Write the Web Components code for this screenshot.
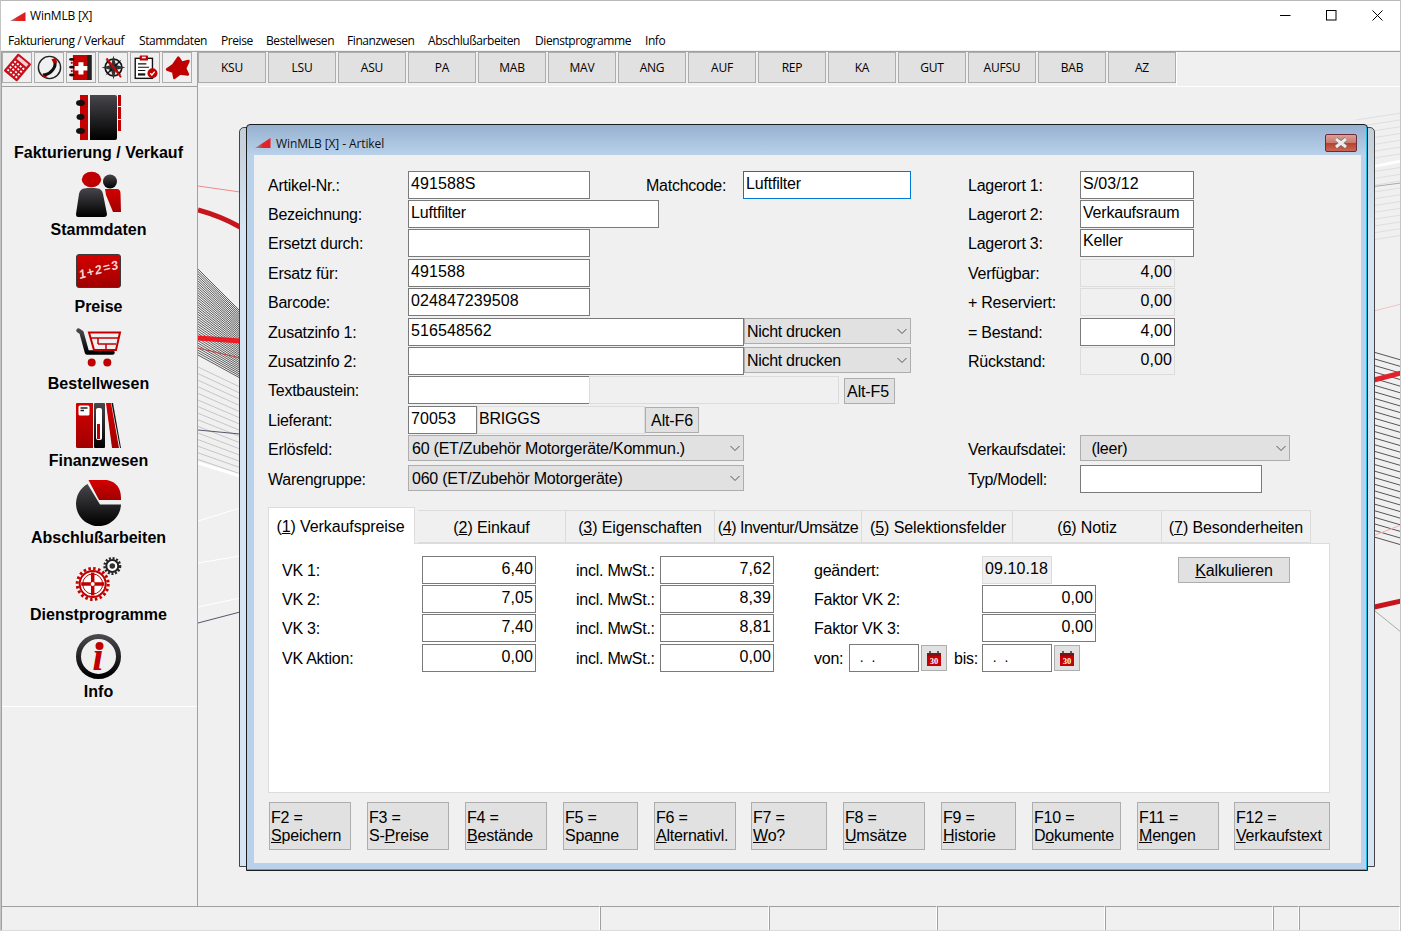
<!DOCTYPE html>
<html lang="de"><head><meta charset="utf-8"><title>WinMLB [X]</title>
<style>
html,body{margin:0;padding:0;height:100%;overflow:hidden;background:#f0f0f0}
body{font-family:"Liberation Sans",Arial,sans-serif;font-size:16px;color:#000}
u{text-underline-offset:1px}
</style></head><body>
<win-app>
  <title-bar slot="title">WinMLB [X]</title-bar>
  <menu-bar slot="menu">
    <menu-item style="width:131px">Fakturierung / Verkauf</menu-item><menu-item style="width:82px">Stammdaten</menu-item><menu-item style="width:45px">Preise</menu-item><menu-item style="width:81px">Bestellwesen</menu-item><menu-item style="width:81px">Finanzwesen</menu-item><menu-item style="width:107px">Abschlußarbeiten</menu-item><menu-item style="width:110px">Dienstprogramme</menu-item><menu-item>Info</menu-item>
  </menu-bar>
  <icon-tools slot="icons">
    <icon-btn><app-icon name="t1" size="25"></app-icon></icon-btn><icon-btn><app-icon name="t2" size="25"></app-icon></icon-btn><icon-btn><app-icon name="t3" size="25"></app-icon></icon-btn><icon-btn><app-icon name="t4" size="25"></app-icon></icon-btn><icon-btn><app-icon name="t5" size="25"></app-icon></icon-btn><icon-btn><app-icon name="t6" size="25"></app-icon></icon-btn>
  </icon-tools>
  <side-nav slot="side">
    <nav-item><app-icon slot="icon" name="book" size="45"></app-icon>Fakturierung / Verkauf</nav-item>
    <nav-item><app-icon slot="icon" name="people" size="45"></app-icon>Stammdaten</nav-item>
    <nav-item><app-icon slot="icon" name="board" size="45"></app-icon>Preise</nav-item>
    <nav-item><app-icon slot="icon" name="cart" size="45"></app-icon>Bestellwesen</nav-item>
    <nav-item><app-icon slot="icon" name="binders" size="45"></app-icon>Finanzwesen</nav-item>
    <nav-item><app-icon slot="icon" name="pie" size="45"></app-icon>Abschlußarbeiten</nav-item>
    <nav-item><app-icon slot="icon" name="gears" size="45"></app-icon>Dienstprogramme</nav-item>
    <nav-item><app-icon slot="icon" name="info" size="45"></app-icon>Info</nav-item>
  </side-nav>
  <text-tools slot="tools">
    <tool-btn>KSU</tool-btn><tool-btn>LSU</tool-btn><tool-btn>ASU</tool-btn><tool-btn>PA</tool-btn><tool-btn>MAB</tool-btn><tool-btn>MAV</tool-btn><tool-btn>ANG</tool-btn><tool-btn>AUF</tool-btn><tool-btn>REP</tool-btn><tool-btn>KA</tool-btn><tool-btn>GUT</tool-btn><tool-btn>AUFSU</tool-btn><tool-btn>BAB</tool-btn><tool-btn>AZ</tool-btn>
  </text-tools>
  <mdi-desktop slot="desk">
    <desk-pattern></desk-pattern>
    <back-window></back-window>
    <mdi-window caption="WinMLB [X] - Artikel">
      <form-grid>
        <f-label style="grid-row:1;grid-column:lab/inp">Artikel-Nr.:</f-label>
        <f-field style="grid-row:1;grid-column:inp/short">491588S</f-field>
        <f-label style="grid-row:1;grid-column:nm/zi;margin-left:1px">Matchcode:</f-label>
        <f-field tight kind="focus" style="grid-row:1;grid-column:zi/sel;margin-left:-1px">Luftfilter</f-field>
        <f-label style="grid-row:1;grid-column:rl/rf">Lagerort 1:</f-label>
        <f-field style="grid-row:1;grid-column:rf/s">S/03/12</f-field>

        <f-label style="grid-row:2;grid-column:lab/inp">Bezeichnung:</f-label>
        <f-field tight style="grid-row:2;grid-column:inp/bez">Luftfilter</f-field>
        <f-label style="grid-row:2;grid-column:rl/rf">Lagerort 2:</f-label>
        <f-field tight style="grid-row:2;grid-column:rf/s">Verkaufsraum</f-field>

        <f-label style="grid-row:3;grid-column:lab/inp">Ersetzt durch:</f-label>
        <f-field style="grid-row:3;grid-column:inp/short"></f-field>
        <f-label style="grid-row:3;grid-column:rl/rf">Lagerort 3:</f-label>
        <f-field tight style="grid-row:3;grid-column:rf/s;padding-top:2px">Keller</f-field>

        <f-label style="grid-row:4;grid-column:lab/inp">Ersatz für:</f-label>
        <f-field style="grid-row:4;grid-column:inp/short">491588</f-field>
        <f-label style="grid-row:4;grid-column:rl/rf">Verfügbar:</f-label>
        <f-field kind="ro" num style="grid-row:4;grid-column:rf/n">4,00</f-field>

        <f-label style="grid-row:5;grid-column:lab/inp">Barcode:</f-label>
        <f-field style="grid-row:5;grid-column:inp/short">024847239508</f-field>
        <f-label style="grid-row:5;grid-column:rl/rf">+ Reserviert:</f-label>
        <f-field kind="ro" num style="grid-row:5;grid-column:rf/n">0,00</f-field>

        <f-label style="grid-row:6;grid-column:lab/inp">Zusatzinfo 1:</f-label>
        <f-field style="grid-row:6;grid-column:inp/zi">516548562</f-field>
        <f-select style="grid-row:6;grid-column:zi/sel;padding-left:2px;letter-spacing:-.3px">Nicht drucken</f-select>
        <f-label style="grid-row:6;grid-column:rl/rf">= Bestand:</f-label>
        <f-field num style="grid-row:6;grid-column:rf/n">4,00</f-field>

        <f-label style="grid-row:7;grid-column:lab/inp">Zusatzinfo 2:</f-label>
        <f-field style="grid-row:7;grid-column:inp/zi"></f-field>
        <f-select style="grid-row:7;grid-column:zi/sel;padding-left:2px;letter-spacing:-.3px">Nicht drucken</f-select>
        <f-label style="grid-row:7;grid-column:rl/rf">Rückstand:</f-label>
        <f-field kind="ro" num style="grid-row:7;grid-column:rf/n">0,00</f-field>

        <f-label style="grid-row:8;grid-column:lab/inp">Textbaustein:</f-label>
        <f-field style="grid-row:8;grid-column:inp/short"></f-field>
        <f-field kind="ro" style="grid-row:8;grid-column:short/ro;margin-left:-1px"></f-field>
        <f-btn style="grid-row:8;grid-column:alt/altend;margin-top:2px;height:26px;padding-right:3px">Alt-F5</f-btn>

        <f-label style="grid-row:9;grid-column:lab/inp">Lieferant:</f-label>
        <f-field style="grid-row:9;grid-column:inp/sup">70053</f-field>
        <f-field tight kind="ro" style="grid-row:9;grid-column:sup/nm;padding-left:1px">BRIGGS</f-field>
        <f-btn style="grid-row:9;grid-column:nm/zi;justify-self:start;width:54px;margin-top:1px;height:26px">Alt-F6</f-btn>

        <f-label style="grid-row:10;grid-column:lab/inp">Erlösfeld:</f-label>
        <f-select style="grid-row:10;grid-column:inp/zi">60 (ET/Zubehör Motorgeräte/Kommun.)</f-select>
        <f-label style="grid-row:10;grid-column:rl/rf">Verkaufsdatei:</f-label>
        <f-select style="grid-row:10;grid-column:rf/e;padding-left:2px">&nbsp;&nbsp;(leer)</f-select>

        <f-label style="grid-row:11;grid-column:lab/inp">Warengruppe:</f-label>
        <f-select style="grid-row:11;grid-column:inp/zi">060 (ET/Zubehör Motorgeräte)</f-select>
        <f-label style="grid-row:11;grid-column:rl/rf">Typ/Modell:</f-label>
        <f-field style="grid-row:11;grid-column:rf/t"></f-field>
      </form-grid>

      <tab-strip>
        <tab-item active style="width:147px;margin-right:3px">(<u>1</u>) Verkaufspreise</tab-item>
        <tab-item style="width:148px">(<u>2</u>) Einkauf</tab-item>
        <tab-item style="width:149px">(<u>3</u>) Eigenschaften</tab-item>
        <tab-item style="width:147px;letter-spacing:-.45px">(<u>4</u>) Inventur/Umsätze</tab-item>
        <tab-item style="width:151px;padding-left:2px">(<u>5</u>) Selektionsfelder</tab-item>
        <tab-item style="width:149px">(<u>6</u>) Notiz</tab-item>
        <tab-item style="width:149px">(<u>7</u>) Besonderheiten</tab-item>
      </tab-strip>

      <tab-panel>
        <f-label style="grid-row:1;grid-column:lab/fld">VK 1:</f-label>
        <f-field num style="grid-row:1;grid-column:fld/e1">6,40</f-field>
        <f-label style="grid-row:1;grid-column:inc/f2">incl. MwSt.:</f-label>
        <f-field num style="grid-row:1;grid-column:f2/e2">7,62</f-field>
        <f-label style="grid-row:1;grid-column:g/f3">geändert:</f-label>
        <f-field kind="ro" style="grid-row:1;grid-column:f3/f3e">09.10.18</f-field>
        <f-btn style="grid-row:1;grid-column:k/ke;height:26px;margin-top:1px"><u>K</u>alkulieren</f-btn>

        <f-label style="grid-row:2;grid-column:lab/fld">VK 2:</f-label>
        <f-field num style="grid-row:2;grid-column:fld/e1">7,05</f-field>
        <f-label style="grid-row:2;grid-column:inc/f2">incl. MwSt.:</f-label>
        <f-field num style="grid-row:2;grid-column:f2/e2">8,39</f-field>
        <f-label style="grid-row:2;grid-column:g/f3">Faktor VK 2:</f-label>
        <f-field num style="grid-row:2;grid-column:f3/f3l">0,00</f-field>

        <f-label style="grid-row:3;grid-column:lab/fld">VK 3:</f-label>
        <f-field num style="grid-row:3;grid-column:fld/e1">7,40</f-field>
        <f-label style="grid-row:3;grid-column:inc/f2">incl. MwSt.:</f-label>
        <f-field num style="grid-row:3;grid-column:f2/e2">8,81</f-field>
        <f-label style="grid-row:3;grid-column:g/f3">Faktor VK 3:</f-label>
        <f-field num style="grid-row:3;grid-column:f3/f3l">0,00</f-field>

        <f-label style="grid-row:4;grid-column:lab/fld">VK Aktion:</f-label>
        <f-field num style="grid-row:4;grid-column:fld/e1">0,00</f-field>
        <f-label style="grid-row:4;grid-column:inc/f2">incl. MwSt.:</f-label>
        <f-field num style="grid-row:4;grid-column:f2/e2">0,00</f-field>
        <f-label style="grid-row:4;grid-column:g/d1">von:</f-label>
        <f-field style="grid-row:4;grid-column:d1/d1e;white-space:pre;font-size:14px;letter-spacing:0">  .  .</f-field>
        <cal-btn style="grid-row:4;grid-column:c1/c1e"></cal-btn>
        <f-label style="grid-row:4;grid-column:bis/f3">bis:</f-label>
        <f-field style="grid-row:4;grid-column:f3/f3e;white-space:pre;font-size:14px;letter-spacing:0">  .  .</f-field>
        <cal-btn style="grid-row:4;grid-column:c2/c2e"></cal-btn>
      </tab-panel>

      <fkey-row>
        <fkey-btn style="width:82px">F2 =<br><u>S</u>peichern</fkey-btn>
        <fkey-btn style="width:82px">F3 =<br>S-<u>P</u>reise</fkey-btn>
        <fkey-btn style="width:82px">F4 =<br><u>B</u>estände</fkey-btn>
        <fkey-btn style="width:75px">F5 =<br>Spa<u>n</u>ne</fkey-btn>
        <fkey-btn style="width:82px">F6 =<br><u>A</u>lternativl.</fkey-btn>
        <fkey-btn style="width:76px;margin-left:-1px">F7 =<br><u>W</u>o?</fkey-btn>
        <fkey-btn style="width:82px">F8 =<br><u>U</u>msätze</fkey-btn>
        <fkey-btn style="width:75px">F9 =<br><u>H</u>istorie</fkey-btn>
        <fkey-btn style="width:89px">F10 =<br>D<u>o</u>kumente</fkey-btn>
        <fkey-btn style="width:82px">F11 =<br><u>M</u>engen</fkey-btn>
        <fkey-btn style="width:96px;margin-left:-1px">F12 =<br><u>V</u>erkaufstext</fkey-btn>
      </fkey-row>
    </mdi-window>
  </mdi-desktop>
  <status-bar slot="status">
    <status-cell style="width:599px"></status-cell><status-cell style="width:169px"></status-cell><status-cell style="width:168px"></status-cell><status-cell style="width:168px"></status-cell><status-cell style="width:168px"></status-cell><status-cell style="width:26px"></status-cell><status-cell style="flex:1"></status-cell>
  </status-bar>
</win-app>

<script>
function define(name, css, html, init){
  customElements.define(name, class extends HTMLElement{
    constructor(){super();this.attachShadow({mode:'open'}).innerHTML='<style>'+css+'</style>'+(html||'<slot></slot>');}
    connectedCallback(){ if(init) init(this); }
  });
}
const UI='"Open Sans","Noto Sans",sans-serif';

define('win-app',`
:host{display:grid;grid-template-columns:198px 1fr;grid-template-rows:auto minmax(0,1fr) auto;width:1401px;height:931px;box-sizing:border-box;border-top:1px solid #b9b9b9;border-left:1px solid #c4c4c4;border-right:1px solid #c4c4c4;background:#f0f0f0;overflow:hidden}
.top{grid-column:1/3}
.left{display:flex;flex-direction:column;border-left:1px solid #a0a0a0;border-right:1px solid #a0a0a0;border-top:1px solid #a0a0a0;min-height:0;width:197px;box-sizing:border-box}
.right{display:flex;flex-direction:column;border-top:1px solid #a0a0a0;min-height:0;margin-left:-1px}
`,`<div class="top"><slot name="title"></slot><slot name="menu"></slot></div>
<div class="left"><slot name="icons"></slot><slot name="side"></slot></div>
<div class="right"><slot name="tools"></slot><slot name="desk"></slot></div>
<div class="top"><slot name="status"></slot></div>`);

define('title-bar',`
:host{display:flex;align-items:center;height:29px;background:#fff;font:12px/16px ${UI};color:#000}
.ic{width:16px;height:9px;margin:1px 4px 0 9px;flex:none}
.txt{flex:1;letter-spacing:-.2px}
.c{width:46px;height:29px;display:flex;align-items:center;justify-content:center}
`,`<svg class="ic" viewBox="0 0 16 9"><defs><linearGradient id="w" x1="0" x2="1"><stop offset="0" stop-color="#999"/><stop offset=".45" stop-color="#d92b2b"/><stop offset="1" stop-color="#e5141c"/></linearGradient></defs><path d="M0 9 15.5 0V9z" fill="url(#w)"/></svg>
<span class="txt"><slot></slot></span>
<span class="c"><svg width="11" height="11" viewBox="0 0 11 11"><path d="M0 5.500h10.500" stroke="#000" fill="none"/></svg></span>
<span class="c"><svg width="11" height="11" viewBox="0 0 11 11"><rect x=".5" y=".5" width="9.500" height="9.500" stroke="#000" fill="none"/></svg></span>
<span class="c"><svg width="11" height="11" viewBox="0 0 11 11"><path d="M.5.500 10.500 10.500M10.500.500.500 10.500" stroke="#000" fill="none"/></svg></span>`);

define('menu-bar',`:host{display:flex;align-items:center;height:20px;background:#fff;padding-left:7px;border-bottom:1px solid #f0f0f0;font:12px/20px ${UI}}`);
define('menu-item',`:host{display:block;white-space:nowrap;flex:none;letter-spacing:-.42px;padding-top:2px}`);
define('icon-tools',`:host{display:flex;gap:2px;height:35px;box-sizing:border-box;flex:none;border-bottom:1px solid #a0a0a0}`);
define('icon-btn',`:host{display:flex;align-items:center;justify-content:center;width:30px;height:31px;box-sizing:border-box;border:1px solid #adadad;background:#f0f0f0}`);
define('text-tools',`:host{display:flex;gap:2px;height:35px;box-sizing:border-box;flex:none;border-bottom:1px solid #fff}
.w{display:flex;gap:2px;border-right:1px solid #fff;height:34px}`,`<div class="w"><slot></slot></div>`);
define('tool-btn',`:host{display:flex;align-items:center;justify-content:center;width:68px;height:31px;box-sizing:border-box;border:1px solid #adadad;background:#e1e1e1;font:12px ${UI};letter-spacing:-.2px}`);
define('side-nav',`:host{display:block;flex:1;min-height:0;background:#f0f0f0}
.top{height:620px;box-sizing:border-box;padding:8px 2px 0 0;border-bottom:1px solid #fff}`,`<div class="top"><slot></slot></div>`);
define('nav-item',`:host{display:flex;flex-direction:column;align-items:center;height:77px;font:bold 16px/18px "Liberation Sans",Arial,sans-serif;white-space:nowrap}
.l{margin-top:4px}`,`<slot name="icon"></slot><span class="l"><slot></slot></span>`);

/* ---------- icons ---------- */
const gradDefs=`<defs>
<linearGradient id="k" x1="0" x2="0" y1="0" y2="1"><stop offset="0" stop-color="#47474c"/><stop offset="1" stop-color="#000"/></linearGradient>
<linearGradient id="r" x1="0" x2="0" y1="0" y2="1"><stop offset="0" stop-color="#d40000"/><stop offset="1" stop-color="#a00000"/></linearGradient></defs>`;
const ICONS={
book:`<rect x="4" y="0" width="8" height="45" fill="#c40000"/><path d="M14 0H39Q41 0 41 2V43Q41 45 39 45H14z" fill="url(#k)"/><path d="M42 0h3v11h-3zM42 12h3v12h-3zM42 25h3v11h-3z" fill="#c00000"/><ellipse cx="4.500" cy="8" rx="4.500" ry="3" fill="#111"/><ellipse cx="4.500" cy="22" rx="4" ry="3" fill="#111"/><ellipse cx="4.500" cy="36" rx="4.500" ry="3" fill="#111"/>`,
people:`<path d="M29 17h12q3 0 3.500 4L45 40H37L30 23z" fill="url(#r)"/><ellipse cx="15.500" cy="7.500" rx="9.700" ry="7.700" fill="#c00000"/><circle cx="34" cy="9.500" r="7" fill="url(#k)"/><path d="M8 16.500Q15 15 22 16.500 26 17 27 22L31 42Q31 45 28 45H2Q0 45 0 42L3 22Q4 17 8 16.500z" fill="url(#k)"/>`,
board:`<rect x=".5" y="5.500" width="44" height="33" rx="2.500" fill="url(#r)" stroke="#3a3a3a"/><text x="4" y="30" transform="rotate(-15 4 30)" font-family="'Liberation Sans',sans-serif" font-style="italic" font-size="12.500" letter-spacing="1.200" fill="#fff" fill-opacity=".85">1+2=3</text>`,
cart:`<path d="M2.500 4.500 5.500 6.500 11 26.500H36.500" fill="none" stroke="url(#k)" stroke-width="4.500" stroke-linecap="round" stroke-linejoin="round"/><path d="M13 6.500H44L40 24H18z" fill="none" stroke="#c00000" stroke-width="2"/><path d="M15 12H42M22 12V18M22 18H40M30 18V24" stroke="#c00000" stroke-width="1.500" fill="none"/><circle cx="15.700" cy="36.500" r="4" fill="#c00000"/><circle cx="31.300" cy="36.500" r="4" fill="#c00000"/>`,
binders:`<path d="M1 0H17V45H1.500Q0 45 0 43.500V1Q0 0 1 0z" fill="url(#r)"/><rect x="2.500" y="2.500" width="11" height="10" rx="1.500" fill="#fff"/><path d="M4.500 5h7M4.500 7.500h3.500" stroke="#222" stroke-width="1.500"/><rect x="18" y="0" width="11" height="45" rx="1" fill="url(#k)"/><rect x="20" y="5" width="6" height="32" rx="2" fill="#fff"/><rect x="21" y="21" width="3" height="15" fill="#c00000"/><path d="M30 0h5L43 45H36z" fill="url(#r)"/><path d="M35.500 0H37L45 45H44z" fill="#111"/>`,
pie:`<path d="M11.500 4 24 24.500H45A22.500 22.500 0 1 1 11.500 4z" fill="url(#k)"/><path d="M12.500 0H31Q45 3 45 18V20H23z" fill="url(#r)"/>`,
gears:`<circle cx="16.700" cy="27" r="15.500" fill="none" stroke="#c00000" stroke-width="3" stroke-dasharray="2.500 2.370"/><circle cx="16.700" cy="27" r="13" fill="#fff" stroke="#c00000" stroke-width="2"/><circle cx="16.700" cy="27" r="10" fill="none" stroke="#c00000" stroke-width="1"/><path d="M16.700 15.500V38.500M5.200 27H28.200" stroke="#c00000" stroke-width="3.500" /><circle cx="16.700" cy="27" r="2" fill="#fff"/><circle cx="36.300" cy="9" r="7.800" fill="none" stroke="#222" stroke-width="2.400" stroke-dasharray="2 1.680"/><circle cx="36.300" cy="9" r="6" fill="#fff" stroke="#222" stroke-width="2"/><circle cx="36.300" cy="9" r="2.800" fill="#333"/>`,
info:`<circle cx="22.500" cy="22.500" r="20" fill="none" stroke="url(#k)" stroke-width="5"/><circle cx="23.500" cy="12" r="4" fill="#c00000"/><text x="22" y="36" text-anchor="middle" font-family="'Liberation Serif',serif" font-weight="bold" font-style="italic" font-size="40" fill="#c00000">ı</text>`,
t1:`<g transform="rotate(40 22.500 22.500)"><rect x="7" y="2" width="31" height="41" rx="2" fill="#c8101c"/><rect x="11" y="5.500" width="23" height="6" fill="#f6d0d0"/><path d="M11 17.500h23M11 24h23M11 30.500h23M11 37h23" stroke="#fff" stroke-width="3.400" stroke-dasharray="3.600 2.800" fill="none"/></g>`,
t2:`<circle cx="22.500" cy="22.500" r="20" fill="none" stroke="#222" stroke-width="2.600"/><path d="M32 10C35 22 26 33 14 36" fill="none" stroke="#111" stroke-width="5.500"/><path d="M26 7.500 33 5.500 36.500 13 30 15.500z" fill="#c00000"/><path d="M11 32.500 18 37 16 41.500 9 38z" fill="#c00000"/><path d="M13 33 18 35.500 16.500 38.500 11 36z" fill="#111"/>`,
t3:`<rect x="7" y="0" width="32" height="45" rx="1" fill="#c40000"/><rect x="33" y="0" width="8" height="45" fill="#222"/><path d="M17 13h9v7h7v8h-7v7h-9v-7h-7v-8h7z" fill="#fff"/><g fill="#111"><ellipse cx="5" cy="8" rx="5" ry="2.500"/><ellipse cx="5" cy="22" rx="5" ry="2.500"/><ellipse cx="5" cy="36" rx="5" ry="2.500"/></g><g fill="#c00000"><circle cx="5" cy="14" r="2"/><circle cx="5" cy="29" r="2"/></g>`,
t4:`<circle cx="22.500" cy="22.500" r="15" fill="none" stroke="#111" stroke-width="3"/><path d="M22.500 1 27 18 44 22.500 27 27 22.500 44 18 27 1 22.500 18 18z" fill="#333"/><path d="M8 8 21 18 18 21zM37 8 27 21 24 18zM8 37 18 24 21 27zM37 37 24 27 27 24z" fill="#111"/><path d="M10 6 36 40" stroke="#d40000" stroke-width="3.500"/>`,
t5:`<rect x="4" y="6" width="31" height="36" fill="#fff" stroke="#111" stroke-width="2.500"/><rect x="12" y="1" width="15" height="9" fill="#c00000" rx="1"/><rect x="16" y="3" width="7" height="3" fill="#fff"/><path d="M9 16H24M9 22H29M9 28H22" stroke="#111" stroke-width="2"/><path d="M9 35H22" stroke="#111" stroke-width="4"/><circle cx="35" cy="33" r="9" fill="#c40000"/><path d="M31 33 34 36 39 30" stroke="#fff" stroke-width="2.500" fill="none"/>`,
t6:`<path d="M24 5 30 14 42 11 36 24 41 35 27 33 17 41 15 30 4 26 15 18z" fill="#bf0000" stroke="#bf0000" stroke-width="5" stroke-linejoin="round"/>`
};
define('app-icon',`:host{display:block;flex:none;line-height:0}svg{display:block;overflow:visible}`,'<span></span>',el=>{
  const s=el.getAttribute('size')||45;
  el.shadowRoot.querySelector('span').innerHTML=`<svg width="${s}" height="${s}" viewBox="0 0 45 45">${gradDefs}${ICONS[el.getAttribute('name')]||''}</svg>`;
});

/* ---------- desktop ---------- */
define('mdi-desktop',`:host{display:block;position:relative;flex:1;min-height:0;overflow:hidden;background:#f0f0f0}`);
define('desk-pattern',`:host{position:absolute;inset:0;display:block}svg{display:block}`,'<span></span>',el=>{
  let g='';
  const L=(x1,y1,x2,y2,c,w)=>{g+=`<path d="M${x1} ${y1}L${x2} ${y2}" stroke="${c}" stroke-width="${w}" fill="none"/>`;};
  for(let i=0;i<15;i++)L(198,367+i*6.600,240,387+i*6.200,'#c6c6c6',1);
  for(let i=0;i<=36;i++)L(198,269+i*86/36,240,311+i*67/36,'#5c5c5c',1);
  L(198,186,240,192,'#f08a8a',1);
  g+='<path d="M198 210Q220 216 240 227" stroke="#c4161c" stroke-width="5" fill="none"/>';
  L(198,338,240,341,'#ed1c24',5);
  L(198,348,240,358,'#c04040',1);
  L(198,430,240,434,'#55556a',1);
  L(198,463,240,476,'#fff',3);
  L(198,521,240,508,'#fff',1);L(198,563,240,556,'#fff',1);L(198,607,240,598,'#fff',1);
  L(198,623,240,612,'#55556a',1);
  for(let i=0;i<19;i++)L(1356,120+i*6.800,1401,113+i*6.800,'#dedede',1);
  L(1370,167,1401,161,'#fff',3);L(1370,187,1401,183,'#aaa',1);L(1370,312,1401,304,'#f2c4c4',1);
  for(let i=0;i<29;i++)L(1370,351+i*6.600,1401,360+i*6.600,'#555',1);
  L(1370,381,1401,373,'#e3202a',5);L(1370,537,1401,525,'#f0b0b0',1);
  L(1370,608,1401,601,'#c4161c',5);L(1370,607,1401,632,'#aaa',1);
  el.shadowRoot.querySelector('span').innerHTML=`<svg width="1203" height="818" viewBox="198 87 1203 818">${g}</svg>`;
});
define('back-window',`:host{position:absolute;left:41px;top:40px;width:1136px;height:740px;box-sizing:border-box;border:1px solid #444;border-radius:5px 5px 0 0;background:linear-gradient(#c4ced8,#d6e4f3 100px)}`,'<span></span>');
define('mdi-window',`
:host{position:absolute;left:48px;top:37px;width:1122px;height:747px;box-sizing:border-box;border:1px solid #1c1c1c;border-radius:4px 4px 0 0;background:linear-gradient(#96b1d0,#b9d1ea 30px);box-shadow:inset -1px -1px 0 #19c1e6;display:flex;flex-direction:column}
.cap{display:flex;align-items:center;height:30px;box-sizing:border-box;padding:6px 0 0 8px;flex:none;font:12px ${UI};letter-spacing:-.1px;color:#111}
.cap svg.i{margin-right:5px}
.sp{flex:1}
.x{width:32px;height:18px;box-sizing:border-box;margin-right:10px;border:1px solid #6d2b3a;border-radius:2px;background:linear-gradient(#dc9e94 0,#cc7a6e 48%,#b4432d 52%,#cc6654 100%);display:flex;align-items:center;justify-content:center}
.body{margin:0 6px 0 7px;flex:none;height:708px;box-sizing:border-box;background:#f0f0f0;padding:16px 31px 0 14px}
`,`<div class="cap"><svg class="i" width="16" height="10" viewBox="0 0 16 10"><defs><linearGradient id="w2" x1="0" x2="1"><stop offset="0" stop-color="#8c9ab0"/><stop offset=".5" stop-color="#d92b2b"/><stop offset="1" stop-color="#ed1c24"/></linearGradient></defs><path d="M0 10 15.500 0V10z" fill="url(#w2)"/></svg><span id="t"></span><span class="sp"></span>
<span class="x"><svg width="16" height="12" viewBox="0 0 16 12"><path d="M3 2 13 10M13 2 3 10" stroke="#6b6b6b" stroke-width="4.200" fill="none"/><path d="M3 2 13 10M13 2 3 10" stroke="#ececec" stroke-width="3" fill="none"/></svg></span></div>
<div class="body"><slot></slot></div>`,el=>{el.shadowRoot.getElementById('t').textContent=el.getAttribute('caption');});

define('form-grid',`:host{display:grid;height:322px;
grid-template-columns:[lab]140px [inp]69px [sup]113px [short]55px [nm]14px [bez]85px [zi]95px [ro]5px [alt]51px [altend]16px [sel]57px [rl]112px [rf]95px [n]19px [s]68px [t]28px [e];
grid-template-rows:29px 29px 30px 29px 30px 29px 29px 30px 29px 30px 28px;align-items:start}`);
define('f-label',`:host{display:block;height:28px;line-height:30px;white-space:nowrap;letter-spacing:-.25px}`);
define('f-field',`:host{display:block;height:28px;box-sizing:border-box;border:1px solid #7a7a7a;background:#fff;padding:3px 2px 0;line-height:18px;white-space:nowrap;overflow:hidden;letter-spacing:.08px}
:host([num]){text-align:right}
:host([tight]){letter-spacing:-.2px}
:host([kind=ro]){background:#f0f0f0;border-color:#dcdcdc}
:host([kind=focus]){border-color:#0078d7}`);
define('f-select',`:host{display:flex;align-items:center;height:26px;box-sizing:border-box;border:1px solid #adadad;background:#e1e1e1;padding:2px 0 0 3px;line-height:18px;white-space:nowrap;position:relative;letter-spacing:-.23px}
svg{position:absolute;right:2px;top:9px}`,`<slot></slot><svg width="12" height="7" viewBox="0 0 12 7"><path d="M1.500 1 6 5.500 10.500 1" stroke="#555" fill="none"/></svg>`);
define('f-btn',`:host{display:flex;align-items:center;justify-content:center;box-sizing:border-box;border:1px solid #adadad;background:#e1e1e1;line-height:18px;white-space:nowrap;padding-top:1px;letter-spacing:-.15px}`);
define('tab-strip',`:host{display:flex;align-items:flex-end;height:36px;margin-top:14px}`);
define('tab-item',`:host{display:flex;align-items:center;justify-content:center;height:33px;box-sizing:border-box;border:1px solid #dcdcdc;border-left:0;background:#f0f0f0;white-space:nowrap;font-size:16px;letter-spacing:-.1px;flex:none;padding-top:2px}
:host([active]){height:37px;margin-bottom:-1px;background:#fff;border-left:1px solid #dcdcdc;border-bottom:0;position:relative;z-index:1;padding:1px 2px 0 0}`);
define('tab-panel',`:host{display:grid;box-sizing:border-box;height:250px;background:#fff;border:1px solid #dcdcdc;padding:12px 0 0 13px;
grid-template-columns:[lab]140px [fld]114px [e1]40px [inc]84px [f2]114px [e2]40px [g]35px [d1]70px [d1e]2px [c1]26px [c1e]7px [bis]28px [f3]70px [f3e]2px [c2]26px [c2e]16px [f3l]82px [k]112px [ke];
grid-template-rows:29px 29px 30px 28px;align-items:start;align-content:start}`);
define('cal-btn',`:host{display:flex;align-items:center;justify-content:center;width:26px;height:26px;margin-top:1px;box-sizing:border-box;border:1px solid #adadad;background:#e1e1e1}`,`<svg width="14" height="15" viewBox="0 0 14 15"><rect x="0" y="2" width="14" height="13" fill="#c40000"/><rect x="0" y="2" width="14" height="3" fill="#7a1515"/><path d="M3 0v3M11 0v3" stroke="#333" stroke-width="1.500"/><text x="7" y="13" text-anchor="middle" font-family="'Liberation Serif',serif" font-weight="bold" font-size="8.500" fill="#fff">30</text></svg>`);
define('fkey-row',`:host{display:flex;gap:16px;margin:9px 0 0 1px}`);
define('fkey-btn',`:host{display:flex;flex-direction:column;justify-content:center;height:48px;box-sizing:border-box;border:1px solid #adadad;background:#e1e1e1;padding:2px 0 0 1px;line-height:18px;white-space:nowrap;flex:none;letter-spacing:-.2px}`,`<div><slot></slot></div>`);
define('status-bar',`:host{display:flex;height:25px;box-sizing:border-box;background:#f0f0f0;border-bottom:1px solid #dcdcdc}`);
define('status-cell',`:host{display:block;box-sizing:border-box;border-top:1px solid #a0a0a0;border-left:1px solid #a0a0a0;border-right:1px solid #fff;flex:none}`,'<span></span>');
</script>
</body></html>
